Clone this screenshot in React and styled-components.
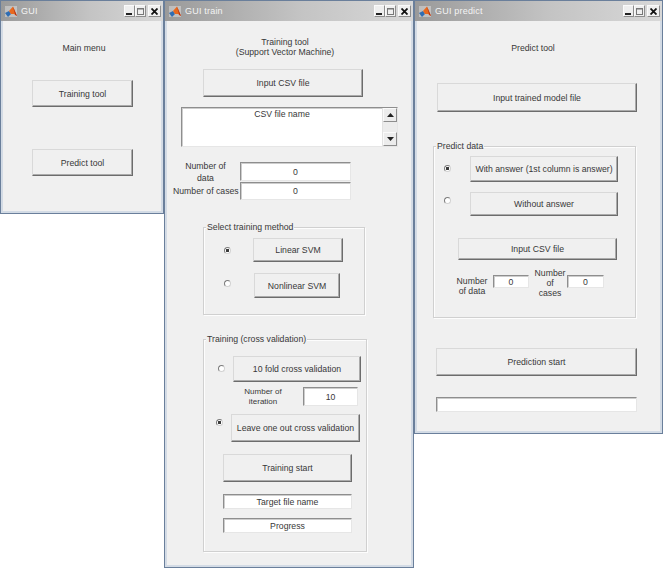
import React from 'react';
import styled, { createGlobalStyle } from 'styled-components';

const Global = createGlobalStyle`
  html, body { margin: 0; padding: 0; background: #fff; }
  body {
    font-family: "Liberation Sans", Arial, sans-serif;
    font-size: 8.7px;
    color: #383838;
  }
  * { box-sizing: border-box; }
`;

const Desktop = styled.div`
  display: flex;
  align-items: flex-start;
  width: 663px;
  height: 568px;
  overflow: hidden;
`;

const Frame = styled.div`
  width: ${(p) => p.$w}px;
  height: ${(p) => p.$h}px;
  flex-shrink: 0;
  display: flex;
  flex-direction: column;
  background: #d3dbe5;
  border: 1px solid #6a7f9b;
`;

const TitleBar = styled.div`
  height: 20px;
  flex-shrink: 0;
  display: flex;
  align-items: center;
  padding: 0 2px 0 4px;
  background: linear-gradient(to right, #9a9a9a, #c4c4c4 55%, #d8d8d8);
`;

const TitleText = styled.span`
  margin-left: 4px;
  font-size: 9px;
  color: #f4f4f4;
  letter-spacing: 0.2px;
`;

const Captions = styled.div`
  margin-left: auto;
  display: flex;
  align-items: center;
`;

const CapButton = styled.span`
  width: ${(p) => p.$w}px;
  height: 12px;
  margin-left: ${(p) => p.$gap || 0}px;
  display: flex;
  align-items: center;
  justify-content: center;
  background: #efefef;
  border: 1px solid;
  border-color: #fafafa #8d8d8d #8d8d8d #fafafa;
`;

const Client = styled.div`
  flex: 1;
  margin: 0 2px 2px;
  background: #f0f0f0;
  display: flex;
  flex-direction: column;
  align-items: flex-start;
`;

const Heading = styled.div`
  align-self: stretch;
  margin-top: ${(p) => p.$mt}px;
  padding-left: ${(p) => p.$pl || 0}px;
  padding-right: ${(p) => p.$pr || 0}px;
  text-align: center;
  line-height: ${(p) => p.$lh || 10}px;
`;

const PushButton = styled.button`
  width: ${(p) => p.$w}px;
  height: ${(p) => p.$h}px;
  margin: ${(p) => p.$mt || 0}px 0 0 ${(p) => p.$ml || 0}px;
  flex-shrink: 0;
  padding: 0;
  font: inherit;
  color: #383838;
  background: #f0f0f0;
  border: 1px solid;
  border-color: #d9d9d9 #6c6c6c #6c6c6c #d9d9d9;
  box-shadow: inset -1px -1px 0 #ababab;
`;

const EditBox = styled.div`
  width: ${(p) => p.$w}px;
  height: ${(p) => p.$h}px;
  margin: ${(p) => p.$mt || 0}px 0 0 ${(p) => p.$ml || 0}px;
  flex-shrink: 0;
  display: flex;
  align-items: center;
  justify-content: center;
  background: #fff;
  border: 1px solid;
  border-color: #8e8e8e #e6e6e6 #e6e6e6 #8e8e8e;
  box-shadow: inset 1px 1px 0 #cdcdcd;
`;

const ListBox = styled.div`
  width: ${(p) => p.$w}px;
  height: ${(p) => p.$h}px;
  margin: ${(p) => p.$mt}px 0 0 ${(p) => p.$ml}px;
  display: flex;
  background: #fff;
  border: 1px solid;
  border-color: #8e8e8e #e6e6e6 #e6e6e6 #8e8e8e;
  box-shadow: inset 1px 1px 0 #cdcdcd;
`;

const ListText = styled.div`
  flex: 1;
  text-align: center;
  line-height: 11px;
  padding-top: 1px;
`;

const ScrollBar = styled.div`
  width: 15px;
  display: flex;
  flex-direction: column;
  justify-content: space-between;
  background: #ececec;
  border-left: 1px solid #e2e2e2;
`;

const ScrollArrow = styled.div`
  height: 14px;
  display: flex;
  align-items: center;
  justify-content: center;
  background: #ececec;
  border: 1px solid;
  border-color: #fafafa #8d8d8d #8d8d8d #fafafa;
`;

const FieldRow = styled.div`
  display: flex;
  align-items: center;
  height: ${(p) => p.$h}px;
  margin: ${(p) => p.$mt || 0}px 0 0 ${(p) => p.$ml || 0}px;
  gap: ${(p) => p.$gap || 0}px;
`;

const FieldLabel = styled.div`
  width: ${(p) => p.$w}px;
  flex-shrink: 0;
  text-align: center;
  line-height: ${(p) => p.$lh || 10}px;
  font-size: ${(p) => p.$fs || 8.7}px;
  white-space: nowrap;
  align-self: ${(p) => (p.$top !== undefined ? 'flex-start' : 'center')};
  margin-top: ${(p) => p.$top || 0}px;
  margin-left: ${(p) => p.$ml || 0}px;
`;

const Panel = styled.div`
  position: relative;
  width: ${(p) => p.$w}px;
  height: ${(p) => p.$h}px;
  margin: ${(p) => p.$mt}px 0 0 ${(p) => p.$ml}px;
  display: flex;
  flex-direction: column;
  align-items: flex-start;
  border: 1px solid #d0d0d0;
  box-shadow: inset 1px 1px 0 #fdfdfd, 1px 1px 0 #fdfdfd;
`;

const PanelTitle = styled.span`
  position: absolute;
  top: -6px;
  left: 2px;
  padding: 0 1px;
  line-height: 11px;
  background: #f0f0f0;
  white-space: nowrap;
`;

const RadioRow = styled.div`
  display: flex;
  align-items: flex-start;
  margin: ${(p) => p.$mt}px 0 0 ${(p) => p.$ml}px;
  gap: ${(p) => p.$gap}px;
`;

const Radio = styled.span`
  width: 7px;
  height: 7px;
  flex-shrink: 0;
  margin-top: ${(p) => p.$top}px;
  border-radius: 50%;
  border: 1px solid;
  border-color: #7b7b7b #d2d2d2 #d2d2d2 #7b7b7b;
  background: ${(p) =>
    p.$on ? 'radial-gradient(circle, #3a3a3a 0 1.4px, #fff 1.9px)' : '#fff'};
`;

const MatlabIcon = () => (
  <svg width="12" height="11" viewBox="0 0 12 11">
    <rect x="0" y="0" width="12" height="11" fill="#ffffff" opacity="0.35" />
    <path d="M0 7 L4 5 L6 8 L3 11 Z" fill="#2f6db3" />
    <path d="M4 5 L8 0.5 L12 10 L9 8 L6 8 Z" fill="#e8691e" />
    <path d="M8 0.5 L12 10 L10.2 9 Z" fill="#b33218" />
  </svg>
);

const WindowCaptions = () => (
  <Captions>
    <CapButton $w={11}>
      <svg width="7" height="7" viewBox="0 0 7 7">
        <rect x="0" y="5" width="6" height="2" fill="#222" />
      </svg>
    </CapButton>
    <CapButton $w={11}>
      <svg width="7" height="7" viewBox="0 0 7 7">
        <rect x="0.5" y="0.5" width="6" height="6" fill="none" stroke="#777" />
        <rect x="0" y="0" width="7" height="1.5" fill="#777" />
      </svg>
    </CapButton>
    <CapButton $w={13} $gap={2}>
      <svg width="7" height="7" viewBox="0 0 7 7">
        <path d="M0.5 0.5 L6.5 6.5 M6.5 0.5 L0.5 6.5" stroke="#111" strokeWidth="1.8" />
      </svg>
    </CapButton>
  </Captions>
);

const Window = ({ w, h, title, children }) => (
  <Frame $w={w} $h={h}>
    <TitleBar>
      <MatlabIcon />
      <TitleText>{title}</TitleText>
      <WindowCaptions />
    </TitleBar>
    <Client>{children}</Client>
  </Frame>
);

const Arrow = ({ up }) => (
  <svg width="7" height="4" viewBox="0 0 7 4">
    <path d={up ? 'M0 4 L3.5 0 L7 4 Z' : 'M0 0 L3.5 4 L7 0 Z'} fill="#222" />
  </svg>
);

export default function App() {
  return (
    <>
      <Global />
      <Desktop>
        <Window w={164} h={214} title="GUI">
          <Heading $mt={22} $pl={4} $lh={11}>Main menu</Heading>
          <PushButton $w={101} $h={27} $mt={26} $ml={29}>Training tool</PushButton>
          <PushButton $w={101} $h={27} $mt={42} $ml={29}>Predict tool</PushButton>
        </Window>

        <Window w={250} h={568} title="GUI train">
          <Heading $mt={16} $pr={8}>
            Training tool
            <br />
            (Support Vector Machine)
          </Heading>
          <PushButton $w={160} $h={28} $mt={12} $ml={36}>Input CSV file</PushButton>
          <ListBox $w={217} $h={40} $mt={10} $ml={14}>
            <ListText>CSV file name</ListText>
            <ScrollBar>
              <ScrollArrow><Arrow up /></ScrollArrow>
              <ScrollArrow><Arrow /></ScrollArrow>
            </ScrollBar>
          </ListBox>
          <FieldRow $h={19} $mt={15} $ml={6} $gap={2}>
            <FieldLabel $w={65} $lh={12}>
              Number of
              <br />
              data
            </FieldLabel>
            <EditBox $w={111} $h={19}>0</EditBox>
          </FieldRow>
          <FieldRow $h={18} $mt={1} $ml={6} $gap={2}>
            <FieldLabel $w={65}>Number of cases</FieldLabel>
            <EditBox $w={111} $h={18}>0</EditBox>
          </FieldRow>

          <Panel $w={162} $h={88} $mt={27} $ml={36}>
            <PanelTitle>Select training method</PanelTitle>
            <RadioRow $mt={10} $ml={20} $gap={22}>
              <Radio $on $top={9} />
              <PushButton $w={90} $h={24}>Linear SVM</PushButton>
            </RadioRow>
            <RadioRow $mt={11} $ml={20} $gap={23}>
              <Radio $top={7} />
              <PushButton $w={86} $h={25}>Nonlinear SVM</PushButton>
            </RadioRow>
          </Panel>

          <Panel $w={164} $h={213} $mt={24} $ml={36}>
            <PanelTitle>Training (cross validation)</PanelTitle>
            <RadioRow $mt={16} $ml={14} $gap={8}>
              <Radio $top={9} />
              <PushButton $w={128} $h={26}>10 fold cross validation</PushButton>
            </RadioRow>
            <FieldRow $h={19} $mt={5} $ml={29} $gap={10}>
              <FieldLabel $w={60} $lh={9.5} $fs={8}>
                Number of
                <br />
                iteration
              </FieldLabel>
              <EditBox $w={55} $h={19}>10</EditBox>
            </FieldRow>
            <RadioRow $mt={8} $ml={12} $gap={8}>
              <Radio $on $top={5} />
              <PushButton $w={129} $h={28}>Leave one out cross validation</PushButton>
            </RadioRow>
            <PushButton $w={129} $h={28} $mt={12} $ml={19}>Training start</PushButton>
            <EditBox $w={129} $h={15} $mt={12} $ml={19}>Target file name</EditBox>
            <EditBox $w={129} $h={15} $mt={9} $ml={19}>Progress</EditBox>
          </Panel>
        </Window>

        <Window w={249} h={434} title="GUI predict">
          <Heading $mt={22} $pr={11}>Predict tool</Heading>
          <PushButton $w={200} $h={29} $mt={30} $ml={20}>Input trained model file</PushButton>
          <Panel $w={203} $h={172} $mt={34} $ml={16}>
            <PanelTitle>Predict data</PanelTitle>
            <RadioRow $mt={9} $ml={10} $gap={19}>
              <Radio $on $top={9} />
              <PushButton $w={148} $h={26}>With answer (1st column is answer)</PushButton>
            </RadioRow>
            <RadioRow $mt={10} $ml={10} $gap={19}>
              <Radio $top={5} />
              <PushButton $w={148} $h={24}>Without answer</PushButton>
            </RadioRow>
            <PushButton $w={159} $h={22} $mt={22} $ml={24}>Input CSV file</PushButton>
            <FieldRow $h={13} $mt={15} $ml={18}>
              <FieldLabel $w={40} $top={1}>
                Number
                <br />
                of data
              </FieldLabel>
              <EditBox $w={36} $h={13} $ml={1}>0</EditBox>
              <FieldLabel $w={34} $top={-7} $ml={4}>
                Number
                <br />
                of
                <br />
                cases
              </FieldLabel>
              <EditBox $w={37} $h={13}>0</EditBox>
            </FieldRow>
          </Panel>
          <PushButton $w={201} $h={28} $mt={30} $ml={19}>Prediction start</PushButton>
          <EditBox $w={201} $h={15} $mt={21} $ml={19} />
        </Window>
      </Desktop>
    </>
  );
}
